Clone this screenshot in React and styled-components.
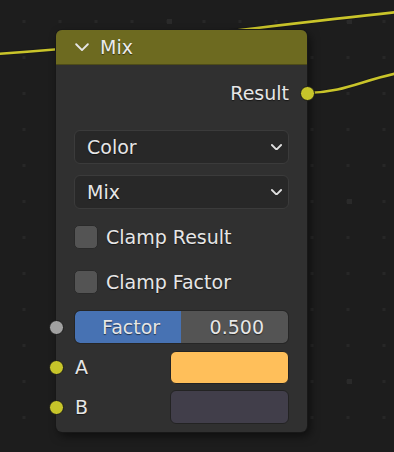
import React from 'react';
import styled, { createGlobalStyle } from 'styled-components';

const GlobalStyle = createGlobalStyle`
html, body {
  margin: 0;
  padding: 0;
  background: #1d1d1d;
}
body {
  font-family: "DejaVu Sans", "Liberation Sans", sans-serif;
  -webkit-font-smoothing: antialiased;
}
`;

const Canvas = styled.div`
position: relative;
width: 394px;
height: 452px;
overflow: hidden;
background: #1d1d1d;
padding: 30px 0 0 56px;
box-sizing: border-box;
`;

const Backdrop = styled.svg`
position: absolute;
left: 0;
top: 0;
width: 394px;
height: 452px;
`;

const Node = styled.div`
position: relative;
width: 251px;
border-radius: 6px;
background: #303030;
box-shadow: 0 0 0 1px #181818, 3px 4px 10px rgba(0,0,0,.55);
color: #e6e6e6;
font-size: 19px;
text-shadow: 0 1px 1px rgba(0,0,0,.55);
`;

const Header = styled.div`
height: 35px;
display: flex;
align-items: center;
gap: 11px;
padding-left: 19px;
background: #6d6a20;
border-radius: 6px 6px 0 0;
border-bottom: 1px solid #4e4c18;
box-sizing: border-box;
`;

const Title = styled.span`
line-height: 1;
color: #ececec;
`;

const Body = styled.div`
display: flex;
flex-direction: column;
padding: 15px 18px 8px 18px;
`;

const OutputRow = styled.div`
position: relative;
height: 26px;
display: flex;
align-items: center;
justify-content: flex-end;
margin-bottom: 24px;
`;

const Socket = styled.span`
position: absolute;
top: 50%;
width: 15px;
height: 15px;
margin-top: -7.5px;
border-radius: 50%;
box-sizing: border-box;
border: 1px solid #1a1a1a;
background: ${p => p.$color};
${p => (p.$side === 'right' ? 'right: -25.5px;' : 'left: -25.5px;')}
`;

const Select = styled.div`
height: 34px;
display: flex;
align-items: center;
justify-content: space-between;
padding: 0 6px 0 12px;
margin-bottom: 11px;
box-sizing: border-box;
background: #282828;
border: 1px solid #3b3b3b;
border-radius: 6px;
`;

const CheckRow = styled.div`
height: 34px;
display: flex;
align-items: center;
gap: 8px;
margin-bottom: 11px;
`;

const Checkbox = styled.span`
width: 24px;
height: 24px;
box-sizing: border-box;
border-radius: 5px;
background: #545454;
border: 1px solid #2a2a2a;
`;

const Slider = styled.div`
position: relative;
height: 34px;
display: flex;
align-items: center;
justify-content: space-between;
padding: 0 24px 0 27px;
margin-bottom: 6px;
box-sizing: border-box;
border: 1px solid #262626;
border-radius: 6px;
background: linear-gradient(to right, #4772b3 ${p => p.$value * 100}%, #545454 ${p => p.$value * 100}%);
background-clip: padding-box;
`;

const ColorRow = styled.div`
position: relative;
height: 34px;
display: flex;
align-items: center;
justify-content: space-between;
margin-bottom: 6px;
&:last-child { margin-bottom: 0; }
`;

const Label = styled.span`
padding-left: 1px;
`;

const Swatch = styled.span`
width: 119px;
height: ${p => p.$h}px;
box-sizing: border-box;
border-radius: 6px;
background: ${p => p.$color};
border: 1px solid #232323;
`;

function Chevron({ size = 12, color = '#e0e0e0', width = 2 }) {
  return (
    <svg width={size} height={size * 0.6} viewBox="0 0 12 7" fill="none">
      <path d="M1 1l5 5 5-5" stroke={color} strokeWidth={width} strokeLinecap="round" strokeLinejoin="round" />
    </svg>
  );
}

function Wires() {
  return (
    <Backdrop viewBox="0 0 394 452">
      <defs>
        <pattern id="minor" x="22.5" y="20" width="36" height="36" patternUnits="userSpaceOnUse">
          <rect width="3" height="3" fill="#272727" />
        </pattern>
        <pattern id="major" x="167" y="19" width="180" height="180" patternUnits="userSpaceOnUse">
          <rect width="5" height="5" fill="#2a2a2a" />
        </pattern>
      </defs>
      <rect width="394" height="452" fill="url(#minor)" />
      <rect width="394" height="452" fill="url(#major)" />
      <path d="M-4 54 C 120 46, 240 29, 398 12" stroke="#1a1a1a" strokeWidth="4.5" fill="none" />
      <path d="M-4 54 C 120 46, 240 29, 398 12" stroke="#c9c42a" strokeWidth="2.6" fill="none" />
      <path d="M307 93 C 345 92, 360 81, 398 73" stroke="#1a1a1a" strokeWidth="4.5" fill="none" />
      <path d="M307 93 C 345 92, 360 81, 398 73" stroke="#c9c42a" strokeWidth="2.6" fill="none" />
    </Backdrop>
  );
}

export default function App() {
  const factor = 0.5;
  return (
    <>
      <GlobalStyle />
      <Canvas>
        <Wires />
        <Node>
          <Header>
            <Chevron size={14} color="#e6e6e6" width={1.6} />
            <Title>Mix</Title>
          </Header>
          <Body>
            <OutputRow>
              Result
              <Socket $side="right" $color="#c7c52a" />
            </OutputRow>
            <Select>
              Color
              <Chevron size={11} />
            </Select>
            <Select>
              Mix
              <Chevron size={11} />
            </Select>
            <CheckRow>
              <Checkbox />
              Clamp Result
            </CheckRow>
            <CheckRow>
              <Checkbox />
              Clamp Factor
            </CheckRow>
            <Slider $value={factor}>
              <Socket $color="#a1a1a1" style={{ left: '-26.5px' }} />
              <span>Factor</span>
              <span>{factor.toFixed(3)}</span>
            </Slider>
            <ColorRow>
              <Socket $color="#c7c52a" />
              <Label>A</Label>
              <Swatch $color="#ffbf5a" $h={33} />
            </ColorRow>
            <ColorRow>
              <Socket $color="#c7c52a" />
              <Label>B</Label>
              <Swatch $color="#413e4a" $h={34} />
            </ColorRow>
          </Body>
        </Node>
      </Canvas>
    </>
  );
}
